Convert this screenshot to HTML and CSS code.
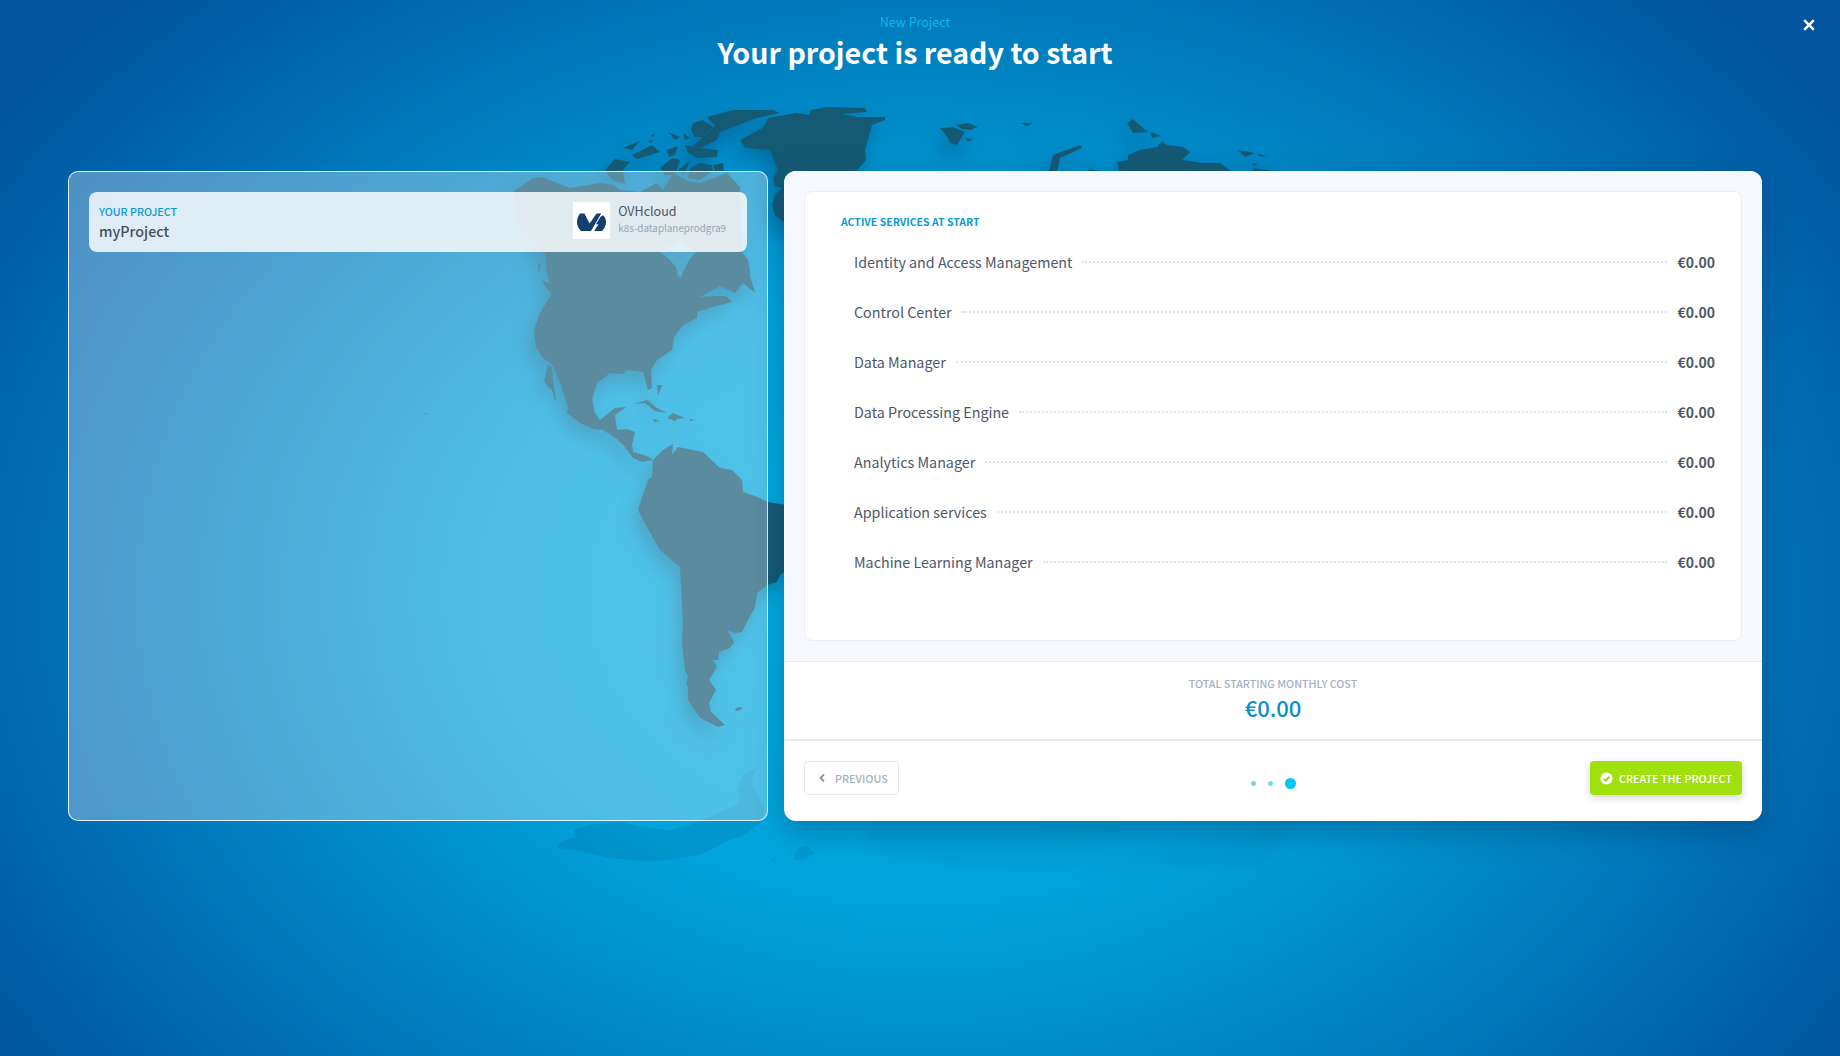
FILE: index.html
```html
<!DOCTYPE html>
<html lang="en">
<head>
<meta charset="utf-8">
<title>New Project</title>
<link rel="stylesheet" href="styles.css">
</head>
<body>
<svg class="map" viewBox="0 0 1840 1056" aria-hidden="true">
  <g class="land">
    <path d="M513 192L533 178L542 177L570 188L600 183L613 185L620 190L640 192L657 183L663 190L673 173L688 181L700 183L727 173L740 187L742 252L748 260L750 270L750 277L755 292L750 289L743 283L735 293L720 286L700 297L716 296L726 296L732 302L713 307L697 312L697 318L683 325L674 337L672 350L657 360L651 370L652 388L648 390L643 372L627 370L623 374L610 373L597 383L592 400L595 413L600 420L615 408L626 407L615 415L617 430L627 429L635 432L632 445L633 452L643 455L647 456L653 460L663 450L673 444L672 455L678 447L703 452L720 468L732 470L742 480L743 492L758 497L767 502L800 507L800 560L780 575L777 582L767 585L757 593L755 607L748 620L742 632L735 633L727 630L734 642L730 648L719 652L718 660L713 660L717 667L709 680L716 690L709 703L711 712L725 725L718 727L700 718L688 700L688 687L686 683L688 677L685 670L682 643L683 620L682 607L680 567L660 550L643 520L638 510L642 497L648 480L652 477L653 460L642 462L633 458L625 447L617 439L603 430L593 429L580 423L567 413L568 407L560 383L553 365L543 358L536 347L534 330L540 313L552 293L547 273L545 253L520 230Z"/>
    <path d="M660 252L668 258L676 267L678 276L681 277L685 268L690 258L697 252L680 240Z" class="water"/>
    <path d="M548 365L544 382L552 390L555 400L556 399L553 382L552 367Z"/>
    <path d="M538 264L541 263L539 273ZM542 280L550 284L552 294L546 288Z"/>
    <path d="M634 404L647 400L657 408L667 413L655 411L645 403ZM667 418L673 413L685 418L677 419L675 421ZM653 419L660 421L654 422ZM690 419L695 420L690 421ZM657 385L662 385L658 396Z"/>
    <path d="M425 413l2 0l-1 2Z"/>
    <path d="M735 709l4-2l4 1l-3 2l-4 1Z"/>
    <path d="M707 117L733 110L773 110L780 113L757 118L733 127L720 132L717 140L700 148L693 146L705 135L715 126Z"/>
    <path d="M693 123L703 120L713 127L703 137L695 137L691 130Z"/>
    <path d="M623 148L640 141L632 150ZM632 155L652 145L660 152L637 159ZM668 132L680 137L675 140ZM683 133L690 138L685 140ZM667 150L678 146L675 155L669 157ZM685 145L700 148L718 150L717 157L697 158L688 153ZM605 170L615 159L630 162L623 170L625 184L612 180ZM660 168L672 158L680 160L675 175L665 175ZM678 170L690 161L684 175ZM690 168L700 163L712 165L713 171L700 180L688 178ZM713 165L723 163L724 172L715 172ZM645 153l7-2l-1 5ZM650 135l5-1l-2 3ZM648 141l6-1l-3 3Z"/>
    <path d="M827 107L865 108L867 112L842 114L857 117L885 117L885 120L872 125L867 143L865 150L866 160L857 170L800 230L784 222L775 215L772 205L775 195L782 188L775 186L773 178L778 170L770 150L745 148L740 140L763 128L768 118L796 113L809 115L811 110Z"/>
    <path d="M940 128L953 127L965 132L957 145L950 143L948 138ZM956 125L968 123L978 127L970 130L962 129ZM965 138L973 139L968 142ZM1020 123L1033 123L1027 126Z"/>
    <path d="M1127 123L1133 119L1148 132L1133 133ZM1150 132L1162 136L1152 138ZM1048 175L1053 155L1080 145L1082 148L1060 158L1056 175ZM1088 175L1089 169L1100 171L1100 175ZM1104 175L1105 170L1108 175Z"/>
    <path d="M1117 162L1128 160L1128 155L1140 150L1157 147L1162 141L1167 145L1183 147L1190 152L1182 160L1203 163L1220 163L1232 172L1120 175Z"/>
    <path d="M1238 150L1255 153L1245 157ZM1257 153L1267 157L1259 156ZM1252 163L1258 164L1254 166ZM1253 168L1273 171L1254 175Z"/>
  </g>
  <g class="ice">
    <path d="M557 848L560 842L575 837L573 830L590 825L620 822L643 827L670 830L690 825L737 805L740 800L737 790L743 775L758 767L753 775L752 785L765 810L760 823L745 835L730 840L700 855L650 862L610 858L575 850Z"/>
    <path d="M793 860L798 848L808 846L814 854L805 859ZM770 860L775 856L776 863Z"/>
  </g>
  <path class="ice-far" d="M873 825L1300 822L1280 843L1260 867L1100 872L960 868L880 852L860 845Z"/>
</svg>

<main class="page">
  <header class="head">
    <p class="eyebrow">New Project</p>
    <h1 class="title">Your project is ready to start</h1>
    <button class="close" type="button" aria-label="Close">
      <svg viewBox="0 0 12 12"><path d="M1.200 1.200L10.800 10.800M10.800 1.200L1.200 10.800"/></svg>
    </button>
  </header>

  <div class="panels">
    <section class="glass">
      <div class="summary">
        <div class="summary-name">
          <span class="label">YOUR PROJECT</span>
          <strong class="name">myProject</strong>
        </div>
        <div class="org">
          <span class="logo">
            <svg viewBox="0 0 29 18"><path d="M3 .4H7.400L12.600 10.400L19.600 .4H24.200L14 18H4C1.500 15.500 0 12.500 0 9C0 6 1 3 3 .4Z"/><path d="M26 2.200C27.900 4 29 6.300 29 9C29 12.400 27.600 15.600 25 18H17.200L21.500 11.200H18.900L23.600 3.800Z"/></svg>
          </span>
          <div class="org-text">
            <span class="org-name">OVHcloud</span>
            <span class="org-id">k8s-dataplaneprodgra9</span>
          </div>
        </div>
      </div>
    </section>

    <section class="card">
      <div class="card-top">
        <div class="services">
          <h2 class="services-title">ACTIVE SERVICES AT START</h2>
          <ul class="rows">
            <li class="row"><span>Identity and Access Management</span><i class="leader"></i><b>€0.00</b></li>
            <li class="row"><span>Control Center</span><i class="leader"></i><b>€0.00</b></li>
            <li class="row"><span>Data Manager</span><i class="leader"></i><b>€0.00</b></li>
            <li class="row"><span>Data Processing Engine</span><i class="leader"></i><b>€0.00</b></li>
            <li class="row"><span>Analytics Manager</span><i class="leader"></i><b>€0.00</b></li>
            <li class="row"><span>Application services</span><i class="leader"></i><b>€0.00</b></li>
            <li class="row"><span>Machine Learning Manager</span><i class="leader"></i><b>€0.00</b></li>
          </ul>
        </div>
      </div>
      <div class="total">
        <span class="total-label">TOTAL STARTING MONTHLY COST</span>
        <span class="total-value">€0.00</span>
      </div>
      <footer class="foot">
        <button class="btn btn-prev" type="button">
          <svg viewBox="0 0 8 12"><path d="M6 2.500L2.500 6L6 9.500"/></svg>
          <span>PREVIOUS</span>
        </button>
        <div class="steps"><i class="step"></i><i class="step"></i><i class="step current"></i></div>
        <button class="btn btn-go" type="button">
          <svg viewBox="0 0 14 14"><circle cx="7" cy="7" r="6.500"/><path d="M4 7.300L6.200 9.500L10 5"/></svg>
          <span>CREATE THE PROJECT</span>
        </button>
      </footer>
    </section>
  </div>
</main>
</body>
</html>
```
FILE: styles.css
```css
* { box-sizing: border-box; }
html, body { margin: 0; height: 100%; }
body {
  position: relative;
  overflow: hidden;
  font-family: "Noto Sans CJK SC", "Source Sans Pro", "Open Sans", sans-serif;
  color: #4d5769;
  background:
    radial-gradient(ellipse 980px 730px at 50% 56%, #00aee3 0%, #00a4dc 42%, #0086c4 70%, #0070b5 88%, rgba(0,90,160,0) 114%),
    #00559e;
}
.map { position: absolute; left: 0; top: 0; width: 1840px; height: 1056px; }
.land { fill: #155a74; filter: drop-shadow(-5px 10px 9px rgba(0, 30, 60, .28)); }
.land .water { fill: #0d86bb; }
.ice { fill: rgba(0, 60, 110, .13); filter: blur(.6px); }
.ice-far { fill: rgba(0, 60, 110, .05); filter: blur(3px); }

.page { position: relative; width: 1840px; height: 1056px; padding: 0 78px 0 68px; }
.head { position: relative; height: 171px; padding-top: 13px; text-align: center; }
.eyebrow { margin: 0; font-size: 12.500px; line-height: 18px; color: #0bb8ea; }
.title { margin: 1px 0 0; font-size: 28.600px; line-height: 40px; font-weight: 700; color: #fff; }
.close {
  position: absolute; right: -53px; top: 19px;
  width: 12px; height: 12px; padding: 0; border: 0; background: none;
}
.close svg { display: block; width: 12px; height: 12px; fill: none; stroke: #fff; stroke-width: 2.400; }

.panels { display: flex; gap: 16px; height: 650px; }
.glass {
  flex: 0 0 700px;
  padding: 20px;
  background: rgba(255, 255, 255, .3);
  border: 1px solid rgba(255, 255, 255, .85);
  border-radius: 10px;
}
.summary {
  display: flex; justify-content: space-between; align-items: center;
  height: 60px; padding: 0 21px 0 10px;
  background: rgba(255, 255, 255, .82);
  border-radius: 8px;
}
.summary-name { display: flex; flex-direction: column; }
.label { font-size: 10.700px; line-height: 16px; font-weight: 500; color: #0a9ad4; }
.name { margin-top: 1px; font-size: 14.300px; line-height: 20px; font-weight: 500; color: #465062; }
.org { display: flex; align-items: flex-start; gap: 8px; margin-bottom: 3px; }
.logo { display: flex; align-items: center; justify-content: center; width: 37px; height: 37px; background: #fff; }
.logo svg { width: 29px; height: 18px; fill: #123f6d; margin-top: 2px; }
.org-text { display: flex; flex-direction: column; }
.org-name { font-size: 12.500px; line-height: 18px; color: #4d5769; }
.org-id { font-size: 9.900px; line-height: 16px; color: #9aa6b5; }

.card {
  flex: 1; display: flex; flex-direction: column;
  background: #fff; border-radius: 12px;
  box-shadow: 0 10px 30px rgba(0, 45, 85, .35);
  overflow: hidden;
}
.card-top { height: 491px; padding: 20px 20px 20px; background: #f5f8fc; border-bottom: 1px solid #e6e9f0; }
.services { height: 450px; padding: 21px 26px 0 36px; background: #fff; border: 1px solid #e9edf3; border-radius: 8px; }
.services-title { margin: 0; font-size: 10.500px; line-height: 18px; font-weight: 700; color: #0a9ad4; }
.rows { margin: 6px 0 0; padding: 0 0 0 13px; list-style: none; }
.row { display: flex; align-items: center; gap: 10px; height: 50px; font-size: 14.300px; line-height: 20px; color: #4d5769; }
.row b { font-size: 14px; font-weight: 700; color: #4d5769; }
.leader { flex: 1; height: 0; border-top: 2px dotted #e0e4ea; }

.total { display: flex; flex-direction: column; align-items: center; height: 79px; padding-top: 13px; border-bottom: 2px solid #e8ebf0; }
.total-label { font-size: 10.700px; line-height: 18px; font-weight: 500; color: #a4afbf; }
.total-value { margin-top: -1px; font-size: 22px; line-height: 30px; font-weight: 500; color: #0a8ec8; }

.foot { display: grid; grid-template-columns: 1fr auto 1fr; align-items: start; padding: 20px 20px 0; flex: 1; }
.btn {
  display: inline-flex; align-items: center; height: 34px;
  font: 500 10.800px/16px "Noto Sans CJK SC", "Source Sans Pro", sans-serif;
  border-radius: 4px;
}
.btn span { margin-top: -1px; }
.btn-prev { justify-self: start; gap: 9px; padding: 0 10px 0 13px; color: #a4afbf; background: #fff; border: 1px solid #e6e9f0; }
.btn-prev svg { width: 8px; height: 12px; fill: none; stroke: #8893a5; stroke-width: 1.800; }
.btn-go { justify-self: end; gap: 6px; padding: 0 10px; color: #fff; background: #a0e00c; border: 0; box-shadow: 0 3px 8px rgba(0, 0, 0, .16); }
.btn-go svg { width: 13px; height: 13px; }
.btn-go circle { fill: #fff; }
.btn-go path { fill: none; stroke: #8fcf0a; stroke-width: 1.800; }
.steps { display: flex; align-items: center; gap: 12px; height: 12px; margin-top: 16px; }
.step { width: 5px; height: 5px; border-radius: 50%; background: #6fdcf7; }
.step.current { width: 11px; height: 11px; background: #00c6f7; }
```
